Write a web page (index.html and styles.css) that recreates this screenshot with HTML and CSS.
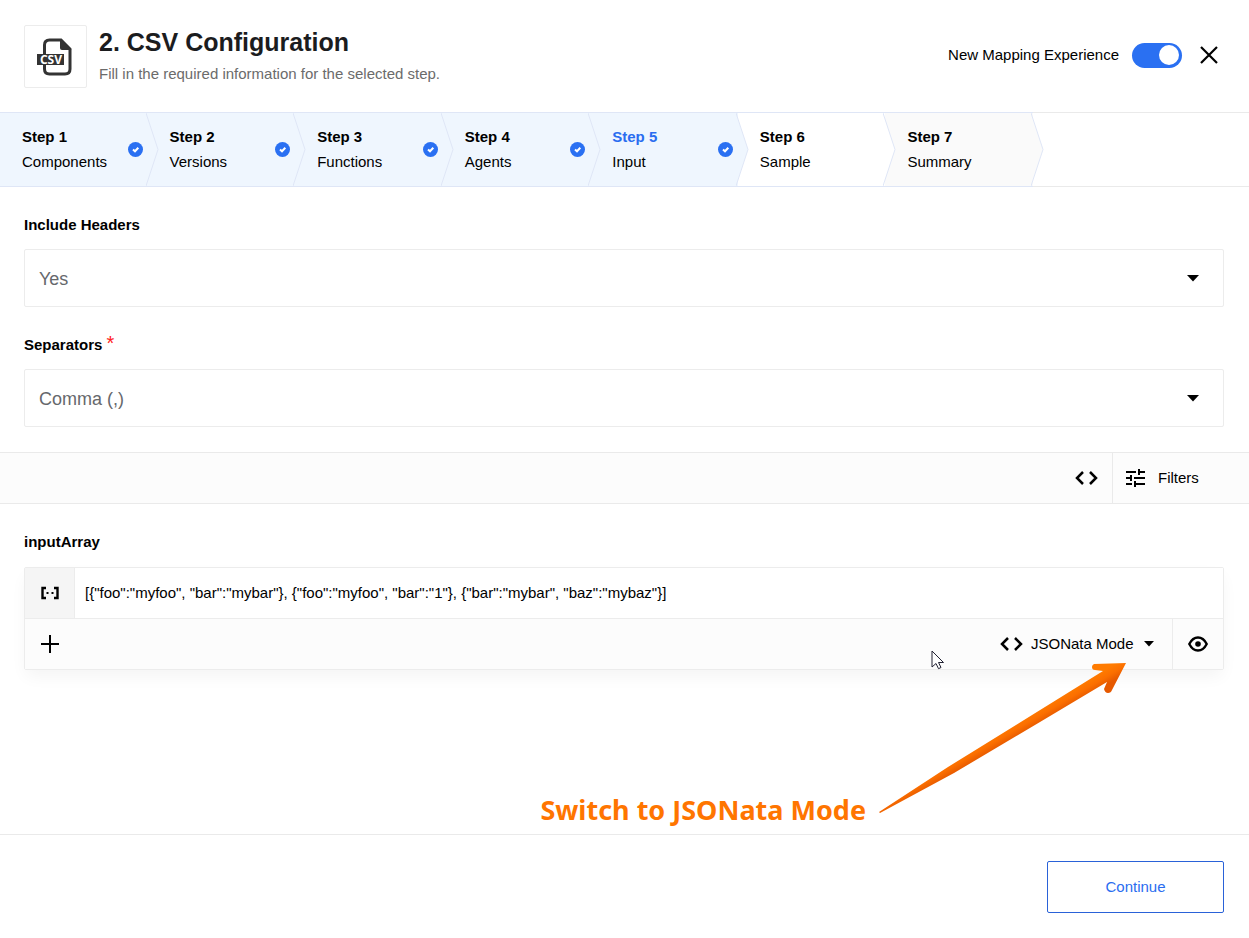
FILE: index.html
```html
<!DOCTYPE html>
<html lang="en">
<head>
<meta charset="utf-8">
<meta name="viewport" content="width=device-width, initial-scale=1">
<title>CSV Configuration</title>
<link rel="stylesheet" href="styles.css">
</head>
<body>
<div class="page">
  <header class="header">
    <div class="component-logo">
      <svg width="37" height="38" viewBox="0 0 37 38" role="img" aria-label="CSV">
        <path d="M7.500 16V7Q7.500 2 12.500 2H24L33 11V31Q33 36 28 36H12.500Q7.500 36 7.500 31V27" fill="none" stroke="#333" stroke-width="3"/>
        <path d="M23 1L34.500 12H25Q23 12 23 10Z" fill="#333"/>
        <rect x="0" y="16" width="27" height="11" fill="#333"/>
        <text class="logo-text" x="14" y="26" text-anchor="middle">CSV</text>
      </svg>
    </div>
    <div class="heading">
      <h1 class="title">2. CSV Configuration</h1>
      <p class="subtitle">Fill in the required information for the selected step.</p>
    </div>
    <label class="experience">New Mapping Experience
      <input class="switch" type="checkbox" checked>
    </label>
    <button class="close" type="button" aria-label="Close">
      <svg width="18" height="18" viewBox="0 0 18 18"><path d="M1 1L17 17M17 1L1 17" fill="none" stroke="#000" stroke-width="2.200"/></svg>
    </button>
  </header>

  <nav class="wizard" aria-label="Steps">
    <ol class="steps">
      <li class="step done"><a class="step-link" href="#components"><span><b class="step-name">Step 1</b><span class="step-label">Components</span></span><svg class="check" viewBox="0 0 15 15"><circle cx="7.500" cy="7.500" r="7.500"/><path d="M5 7.500L7 9.300L10.300 5.800"/></svg></a><svg class="chevron" viewBox="0 0 13 73" preserveAspectRatio="none"><path d="M0 0L12 36.500L0 73"/></svg></li>
      <li class="step done"><a class="step-link" href="#versions"><span><b class="step-name">Step 2</b><span class="step-label">Versions</span></span><svg class="check" viewBox="0 0 15 15"><circle cx="7.500" cy="7.500" r="7.500"/><path d="M5 7.500L7 9.300L10.300 5.800"/></svg></a><svg class="chevron" viewBox="0 0 13 73" preserveAspectRatio="none"><path d="M0 0L12 36.500L0 73"/></svg></li>
      <li class="step done"><a class="step-link" href="#functions"><span><b class="step-name">Step 3</b><span class="step-label">Functions</span></span><svg class="check" viewBox="0 0 15 15"><circle cx="7.500" cy="7.500" r="7.500"/><path d="M5 7.500L7 9.300L10.300 5.800"/></svg></a><svg class="chevron" viewBox="0 0 13 73" preserveAspectRatio="none"><path d="M0 0L12 36.500L0 73"/></svg></li>
      <li class="step done"><a class="step-link" href="#agents"><span><b class="step-name">Step 4</b><span class="step-label">Agents</span></span><svg class="check" viewBox="0 0 15 15"><circle cx="7.500" cy="7.500" r="7.500"/><path d="M5 7.500L7 9.300L10.300 5.800"/></svg></a><svg class="chevron" viewBox="0 0 13 73" preserveAspectRatio="none"><path d="M0 0L12 36.500L0 73"/></svg></li>
      <li class="step done current"><a class="step-link" href="#input" aria-current="step"><span><b class="step-name">Step 5</b><span class="step-label">Input</span></span><svg class="check" viewBox="0 0 15 15"><circle cx="7.500" cy="7.500" r="7.500"/><path d="M5 7.500L7 9.300L10.300 5.800"/></svg></a><svg class="chevron" viewBox="0 0 13 73" preserveAspectRatio="none"><path d="M0 0L12 36.500L0 73"/></svg></li>
      <li class="step"><a class="step-link" href="#sample"><span><b class="step-name">Step 6</b><span class="step-label">Sample</span></span></a><svg class="chevron" viewBox="0 0 13 73" preserveAspectRatio="none"><path d="M0 0L12 36.500L0 73"/></svg></li>
      <li class="step upcoming"><a class="step-link" href="#summary"><span><b class="step-name">Step 7</b><span class="step-label">Summary</span></span></a><svg class="chevron" viewBox="0 0 13 73" preserveAspectRatio="none"><path d="M0 0L12 36.500L0 73"/></svg></li>
    </ol>
  </nav>

  <main class="content">
    <section class="fields">
      <div class="field">
        <label class="field-label" for="headers">Include Headers</label>
        <div class="select-box">
          <select class="select" id="headers"><option>Yes</option><option>No</option></select>
          <svg class="caret" width="12" height="7" viewBox="0 0 12 7"><path d="M0 0H12L6 6.500Z"/></svg>
        </div>
      </div>
      <div class="field">
        <label class="field-label" for="separators">Separators <span class="required">*</span></label>
        <div class="select-box">
          <select class="select" id="separators"><option>Comma (,)</option><option>Semicolon (;)</option></select>
          <svg class="caret" width="12" height="7" viewBox="0 0 12 7"><path d="M0 0H12L6 6.500Z"/></svg>
        </div>
      </div>
    </section>

    <div class="toolbar">
      <button class="tool code-tool" type="button" aria-label="Code view">
        <svg width="23" height="14" viewBox="0 0 23 14"><path class="line" d="M8 1L2 7L8 13M15 1L21 7L15 13"/></svg>
      </button>
      <button class="tool filter-tool" type="button">
        <svg width="20" height="20" viewBox="0 0 20 20"><path class="thin" d="M1 4H11M14 4H20M14 1V7M1 10H6M6 7V13M9 10H20M1 16H7M10 16H20M10 13V19"/></svg>
        Filters
      </button>
    </div>

    <section class="mapping">
      <label class="field-label" for="expression">inputArray</label>
      <div class="editor">
        <div class="expression-row">
          <span class="type-badge">
            <svg width="20" height="14" viewBox="0 0 20 14"><path d="M6 2H2.500V12H6M14 2H17.500V12H14" fill="none" stroke="#000" stroke-width="2.400"/><path d="M6.500 6H8.500V8H6.500ZM11.500 6H13.500V8H11.500Z"/></svg>
          </span>
          <input class="expression" id="expression" type="text" value='[{"foo":"myfoo", "bar":"mybar"}, {"foo":"myfoo", "bar":"1"}, {"bar":"mybar", "baz":"mybaz"}]'>
        </div>
        <div class="editor-bar">
          <button class="tool add" type="button" aria-label="Add">
            <svg width="18" height="18" viewBox="0 0 18 18"><path class="thin" d="M9 0V18M0 9H18"/></svg>
          </button>
          <div class="mode">
            <svg width="23" height="14" viewBox="0 0 23 14"><path class="line" d="M8 1L2 7L8 13M15 1L21 7L15 13"/></svg>
            <select class="mode-select" aria-label="Editor mode"><option>JSONata Mode</option></select>
            <svg class="mode-caret" width="10" height="6" viewBox="0 0 10 6"><path d="M0 0H10L5 5.500Z"/></svg>
          </div>
          <button class="tool preview" type="button" aria-label="Preview">
            <svg width="20" height="16" viewBox="0 0 20 16"><path d="M1.300 8Q4.600 1.500 10 1.500T18.700 8Q15.400 14.500 10 14.500T1.300 8Z" fill="none" stroke="#000" stroke-width="2.400"/><circle cx="10" cy="8" r="2.800"/></svg>
          </button>
        </div>
      </div>
    </section>
  </main>

  <footer class="footer">
    <button class="continue" type="button">Continue</button>
  </footer>

  <div class="callout">
    <span class="callout-text">Switch to JSONata Mode</span>
    <svg class="callout-arrow" width="250" height="152" viewBox="0 0 250 152" aria-hidden="true">
      <defs><linearGradient id="shaft" gradientUnits="userSpaceOnUse" x1="197" y1="25" x2="204" y2="37"><stop offset="0" stop-color="#ff7b00"/><stop offset=".5" stop-color="#fb6f00"/><stop offset="1" stop-color="#e65900"/></linearGradient></defs>
      <path d="M248 1L216 2Q214 3 214 5Q214 8 217 8L225 9L146 58L70 105L1 150L2 151L76 111L162 60L229 20L226 27Q227 31 230 31Q233 31 234 28Z" fill="url(#shaft)"/>
    </svg>
  </div>
  <svg class="pointer" width="14" height="20" viewBox="0 0 14 20" aria-hidden="true"><path d="M1 1V17L5 13.500L7.500 18.700L10 17.500L7.500 12.500H12.500Z" fill="#fff" stroke="#223" stroke-width="1"/></svg>
</div>
</body>
</html>
```
FILE: styles.css
```css
* { box-sizing: border-box; }

body {
  margin: 0;
  background: #fff;
  color: #000;
  font: 15px/20px "Liberation Sans", Arial, sans-serif;
}

button, input, select { font: inherit; color: inherit; }

.page {
  position: relative;
  display: flex;
  flex-direction: column;
  min-height: 100vh;
}

.header {
  display: flex;
  align-items: flex-start;
  padding: 25px 25px 24px 24px;
}

.component-logo {
  display: grid;
  place-items: center;
  width: 63px;
  height: 63px;
  border: 1px solid #ececec;
  border-radius: 2px;
}

.logo-text {
  font: bold 12px "Open Sans", sans-serif;
  fill: #fff;
}

.heading { margin-left: 12px; margin-right: auto; }

.title {
  margin: 0;
  font-size: 25px;
  line-height: 34px;
  color: #1b1c1e;
}

.subtitle { margin: 5px 0 0; color: #6b6b6b; }

.experience {
  display: flex;
  align-items: center;
  gap: 13px;
}

.experience, .close { height: 26px; margin-top: 17px; }

.switch {
  appearance: none;
  display: flex;
  align-items: center;
  justify-content: flex-end;
  width: 50px;
  height: 25px;
  margin: 0;
  padding: 3px;
  border-radius: 13px;
  background: #2a70f2;
}

.switch::before {
  content: "";
  width: 20px;
  height: 20px;
  border-radius: 50%;
  background: #fff;
}

.switch:not(:checked) { justify-content: flex-start; background: #bbb; }

.close {
  display: grid;
  place-items: center;
  width: 30px;
  margin-left: 12px;
  padding: 0;
  border: 0;
  background: none;
}

.wizard { border-top: 1px solid #eaeaea; border-bottom: 1px solid #eaeaea; }

.steps {
  display: grid;
  grid-template-columns: repeat(7, 1fr);
  margin: -1px 216px -1px 0;
  padding: 0;
  list-style: none;
}

.step {
  position: relative;
  background: #fff;
  border-top: 1px solid #dfe6f6;
  border-bottom: 1px solid #dfe6f6;
}

.done { background: #eff6fe; }
.upcoming { background: #fafafa; }

.step-link {
  display: flex;
  align-items: center;
  justify-content: space-between;
  height: 73px;
  padding: 0 5px 2px 22px;
  color: #000;
  text-decoration: none;
}

.step-name, .step-label { display: block; line-height: 25px; }
.current .step-name { color: #2a6df0; }

.check { width: 15px; height: 15px; margin-top: 2px; }
.check circle { fill: #2a70f2; }
.check path { fill: none; stroke: #fff; stroke-width: 2; }

.chevron {
  position: absolute;
  z-index: 1;
  top: 0;
  right: -11px;
  width: 13px;
  height: 100%;
  fill: #fff;
  stroke: #dfe6f6;
  stroke-width: 1;
}

.done .chevron { fill: #eff6fe; }
.upcoming .chevron { fill: #fafafa; }

.content { flex: 1; }

.fields {
  display: grid;
  gap: 24px;
  padding: 24px 25px 25px 24px;
}

.field-label {
  display: block;
  height: 28px;
  margin-bottom: 10px;
  line-height: 28px;
  font-weight: bold;
}

.required {
  font-size: 20px;
  line-height: 20px;
  font-weight: normal;
  color: #f22;
}

.select-box { display: grid; align-items: center; }

.select, .caret { grid-area: 1 / 1; }

.select {
  appearance: none;
  width: 100%;
  height: 58px;
  padding: 2px 48px 0 14px;
  border: 1px solid #ececec;
  border-radius: 2px;
  background: #fff;
  color: #66686c;
  font-size: 18px;
}

.caret { justify-self: end; margin-right: 25px; pointer-events: none; }

.toolbar {
  display: flex;
  justify-content: flex-end;
  height: 52px;
  border-top: 1px solid #eaeaea;
  border-bottom: 1px solid #eaeaea;
  background: #fcfcfc;
}

.tool {
  display: flex;
  align-items: center;
  gap: 13px;
  padding: 0;
  border: 0;
  background: none;
}

.line, .thin { fill: none; stroke: #000; stroke-width: 2; }
.line { stroke-width: 2.5; }

.code-tool { padding: 0 14px; }

.filter-tool {
  width: 137px;
  padding-left: 12px;
  border-left: 1px solid #eaeaea;
}

.mapping { padding: 24px 25px 24px 24px; }

.mapping .field-label { margin-bottom: 11px; }

.editor {
  border: 1px solid #ececec;
  border-radius: 2px;
  box-shadow: 0 8px 16px -2px #0000000c;
}

.expression-row { display: flex; height: 50px; }

.type-badge {
  display: grid;
  place-items: center;
  width: 50px;
  background: #f5f5f5;
  border-right: 1px solid #ececec;
}

.expression {
  flex: 1;
  min-width: 0;
  padding: 0 10px;
  border: 0;
  background: #fff;
}

.editor-bar {
  display: flex;
  height: 51px;
  border-top: 1px solid #ececec;
  background: #fcfcfc;
}

.add { padding: 0 16px; margin-right: auto; }

.mode { display: flex; align-items: center; }

.mode-select {
  appearance: none;
  margin-left: 8px;
  margin-right: -26px;
  padding: 0 36px 0 0;
  border: 0;
  background: none;
}

.mode-caret { margin-right: 18px; pointer-events: none; }

.preview {
  justify-content: center;
  width: 51px;
  border-left: 1px solid #ececec;
}

.footer {
  display: flex;
  justify-content: flex-end;
  padding: 26px 25px 25px;
  border-top: 1px solid #eaeaea;
}

.continue {
  width: 177px;
  height: 52px;
  border: 1px solid #2a62d8;
  border-radius: 2px;
  background: #fff;
  color: #2a6df0;
}

/* Tutorial callout drawn over the dialog */
.callout {
  position: absolute;
  top: 662px;
  right: 121px;
  display: flex;
  align-items: flex-end;
  gap: 12px;
  pointer-events: none;
}

.callout-text {
  margin-bottom: -10px;
  font: bold 27px/28px "Noto Sans", "Open Sans", sans-serif;
  color: #ff7500;
  white-space: nowrap;
}

.pointer {
  position: absolute;
  top: 650px;
  right: 304px;
  pointer-events: none;
}
```
